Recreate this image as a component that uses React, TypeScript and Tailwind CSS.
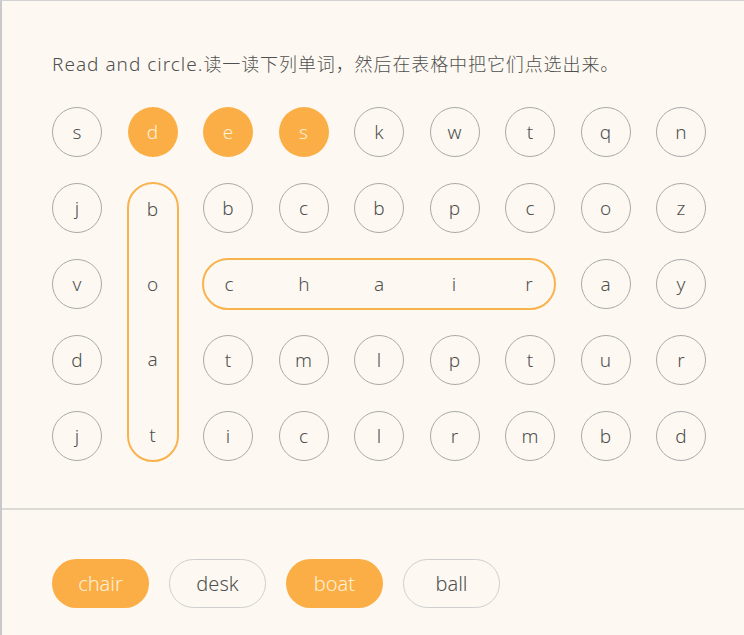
import React from "react";

const grid: string[][] = [
  ["s", "d", "e", "s", "k", "w", "t", "q", "n"],
  ["j", "b", "b", "c", "b", "p", "c", "o", "z"],
  ["v", "o", "c", "h", "a", "i", "r", "a", "y"],
  ["d", "a", "t", "m", "l", "p", "t", "u", "r"],
  ["j", "t", "i", "c", "l", "r", "m", "b", "d"],
];

const filled = new Set(["0-1", "0-2", "0-3"]);

function Cell({ ch, fill }: { ch: string; fill?: boolean }) {
  return (
    <div
      className={
        fill
          ? "w-[50px] h-[50px] rounded-full bg-[#fbae45] flex items-center justify-center text-[19px] text-[#fff0d6]"
          : "w-[50px] h-[50px] rounded-full border border-[#a9a9a9] flex items-center justify-center text-[19px] text-[#505050]"
      }
    >
      {ch}
    </div>
  );
}

export default function App() {
  const cells: React.ReactNode[] = [];
  grid.forEach((row, r) => {
    row.forEach((ch, c) => {
      if (c === 1 && r >= 1) return;
      if (r === 2 && c >= 2 && c <= 6) return;
      cells.push(
        <div key={`${r}-${c}`} style={{ gridRow: r + 1, gridColumn: c + 1 }}>
          <Cell ch={ch} fill={filled.has(`${r}-${c}`)} />
        </div>
      );
    });
  });

  return (
    <div
      className="w-[744px] h-[635px] bg-[#fdf9f2] border-l-2 border-t border-l-[#c9c9c9] border-t-[#d2d2d2] flex flex-col"
      style={{ fontFamily: '"Noto Sans", "Noto Sans CJK SC", sans-serif' }}
    >
      <div className="h-[507px] pl-[50px] pt-[50px] font-light">
        <div className="text-[18px] leading-[26px] text-[#505050] whitespace-nowrap">
          <span className="text-[19px] tracking-[1px]">Read and circle.</span>
          <span className="tracking-[0.9px]">读一读下列单词，然后在表格中把它们点选出来。</span>
        </div>
        <div className="mt-[30px] grid grid-cols-[repeat(9,50px)] grid-rows-[repeat(5,50px)] gap-x-[25.5px] gap-y-[26px]">
          {cells}
          <div className="col-start-2 row-start-2 row-span-4 rounded-full border-2 border-[#f9b34e] flex flex-col justify-between items-center -m-px">
            {["b", "o", "a", "t"].map((ch, i) => (
              <div key={i} className="h-[50px] flex items-center justify-center text-[19px] text-[#505050]">
                {ch}
              </div>
            ))}
          </div>
          <div className="col-start-3 col-span-5 row-start-3 rounded-full border-2 border-[#f9b34e] flex justify-between items-center -m-px">
            {["c", "h", "a", "i", "r"].map((ch, i) => (
              <div key={i} className="w-[50px] flex items-center justify-center text-[19px] text-[#505050]">
                {ch}
              </div>
            ))}
          </div>
        </div>
      </div>
      <div className="h-[2px] bg-[#dcdad5]" />
      <div className="pl-[50px] pt-[49px] flex gap-[20px] font-light">
        {[
          { t: "chair", f: true },
          { t: "desk", f: false },
          { t: "boat", f: true },
          { t: "ball", f: false },
        ].map((b) => (
          <div
            key={b.t}
            className={
              b.f
                ? "w-[97px] h-[49px] rounded-full bg-[#fbae45] flex items-center justify-center text-[20px] text-[#fff0d6]"
                : "w-[97px] h-[49px] rounded-full border border-[#cfcfcf] flex items-center justify-center text-[20px] text-[#505050]"
            }
          >
            {b.t}
          </div>
        ))}
      </div>
    </div>
  );
}
